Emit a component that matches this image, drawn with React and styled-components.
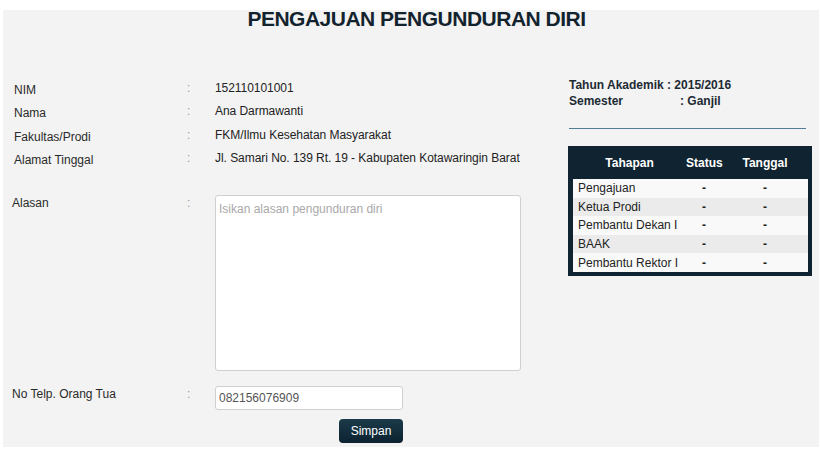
import React from 'react';
import styled, { createGlobalStyle } from 'styled-components';

const GlobalStyle = createGlobalStyle`
  html, body {
    margin: 0;
    padding: 0;
    background: #ffffff;
    font-family: "Liberation Sans", Arial, sans-serif;
  }
`;

const Panel = styled.div`
  margin: 10px 1px 0 3px;
  height: 437px;
  box-sizing: border-box;
  background: #f3f3f3;
  padding: 0 0 0 11px;
  display: flex;
  flex-direction: column;
`;

const Title = styled.h1`
  margin: -2px 0 0 0;
  font-size: 21px;
  line-height: 21px;
  letter-spacing: -0.5px;
  font-weight: bold;
  text-align: center;
  color: #13232e;
`;

const Body = styled.div`
  display: flex;
  align-items: flex-start;
  margin-top: 41px;
`;

const LeftCol = styled.div`
  flex: 0 0 554px;
  padding-top: 6px;
`;

const RightCol = styled.div`
  flex: 0 0 244px;
  padding-top: 7px;
`;

const InfoRow = styled.div`
  display: grid;
  grid-template-columns: 173px 28px 1fr;
  height: 23.5px;
  align-items: center;
  font-size: 12px;
`;

const Label = styled.div`
  color: #2a2a2a;
  padding-top: ${p => (p.$shift ? '4px' : '0')};
  margin-left: ${p => (p.$shift ? '0' : '-2px')};
`;

const Colon = styled.div`
  color: #9a9a9a;
`;

const Value = styled.div`
  color: #222;
  letter-spacing: -0.05px;
`;

const FieldRow = styled.div`
  display: grid;
  grid-template-columns: 173px 28px 1fr;
  align-items: start;
  font-size: 12px;
  line-height: 16px;
  margin-top: ${p => p.$top}px;
`;

const TextArea = styled.textarea`
  width: 306px;
  height: 176px;
  box-sizing: border-box;
  border: 1px solid #cfcfcf;
  border-radius: 3px;
  background: #fff;
  padding: 6px 3px;
  font-family: "Liberation Sans", Arial, sans-serif;
  font-size: 12px;
  line-height: 14px;
  color: #333;
  resize: none;
  display: block;
  &::placeholder {
    color: #a9a9a9;
  }
`;

const Input = styled.input`
  width: 188px;
  height: 24px;
  box-sizing: border-box;
  border: 1px solid #cfcfcf;
  border-radius: 3px;
  background: #fff;
  padding: 0 3px;
  font-family: "Liberation Sans", Arial, sans-serif;
  font-size: 12px;
  color: #555;
  display: block;
`;

const ButtonRow = styled.div`
  display: flex;
  justify-content: flex-end;
  width: 389px;
  margin-top: 9px;
`;

const Button = styled.button`
  width: 64px;
  height: 24px;
  border: none;
  border-radius: 4px;
  background: linear-gradient(#1b3a4a, #0c2230);
  color: #fff;
  font-family: "Liberation Sans", Arial, sans-serif;
  font-size: 12px;
  cursor: pointer;
`;

const Meta = styled.div`
  margin-left: 1px;
  font-size: 12px;
  line-height: 16px;
  font-weight: bold;
  color: #1c2a33;
`;

const MetaKey = styled.span`
  display: ${p => (p.$fixed ? 'inline-block' : 'inline')};
  width: ${p => (p.$fixed ? '111px' : 'auto')};
`;

const Rule = styled.div`
  margin: 19px 0 0 1px;
  width: 237px;
  height: 1px;
  background: #4f7d98;
`;

const Table = styled.div`
  margin-top: 17px;
  width: 244px;
  box-sizing: border-box;
  background: #0f2430;
  padding: 0 4px 4px 5px;
`;

const Grid = styled.div`
  display: grid;
  grid-template-columns: 113px 36px 1fr;
  align-items: center;
`;

const HeadRow = styled(Grid)`
  height: 33px;
  color: #fff;
  font-weight: bold;
  font-size: 12px;
  text-align: center;
`;

const Row = styled(Grid)`
  height: 18.6px;
  font-size: 12px;
  color: #222;
  background: ${p => (p.$alt ? '#ebebeb' : '#f9f9f9')};
`;

const Cell = styled.div`
  text-align: ${p => (p.$left ? 'left' : 'center')};
  padding-left: ${p => (p.$left ? '5px' : '0')};
  font-weight: ${p => (p.$left ? 'normal' : 'bold')};
  white-space: nowrap;
`;

const info = [
  ['NIM', '152110101001'],
  ['Nama', 'Ana Darmawanti'],
  ['Fakultas/Prodi', 'FKM/Ilmu Kesehatan Masyarakat'],
  ['Alamat Tinggal', 'Jl. Samari No. 139 Rt. 19 - Kabupaten Kotawaringin Barat'],
];

const steps = ['Pengajuan', 'Ketua Prodi', 'Pembantu Dekan I', 'BAAK', 'Pembantu Rektor I'];

export default function App() {
  return (
    <>
      <GlobalStyle />
      <Panel>
        <Title>PENGAJUAN PENGUNDURAN DIRI</Title>
        <Body>
          <LeftCol>
            {info.map(([k, v]) => (
              <InfoRow key={k}>
                <Label $shift>{k}</Label>
                <Colon>:</Colon>
                <Value>{v}</Value>
              </InfoRow>
            ))}
            <FieldRow $top={25}>
              <Label>Alasan</Label>
              <Colon>:</Colon>
              <TextArea placeholder="Isikan alasan pengunduran diri" />
            </FieldRow>
            <FieldRow $top={15}>
              <Label>No Telp. Orang Tua</Label>
              <Colon>:</Colon>
              <Input defaultValue="082156076909" />
            </FieldRow>
            <ButtonRow>
              <Button>Simpan</Button>
            </ButtonRow>
          </LeftCol>
          <RightCol>
            <Meta>
              <div>
                <MetaKey>Tahun Akademik </MetaKey>: 2015/2016
              </div>
              <div>
                <MetaKey $fixed>Semester</MetaKey>: Ganjil
              </div>
            </Meta>
            <Rule />
            <Table>
              <HeadRow>
                <Cell>Tahapan</Cell>
                <Cell>Status</Cell>
                <Cell>Tanggal</Cell>
              </HeadRow>
              {steps.map((s, i) => (
                <Row key={s} $alt={i % 2 === 1}>
                  <Cell $left>{s}</Cell>
                  <Cell>-</Cell>
                  <Cell>-</Cell>
                </Row>
              ))}
            </Table>
          </RightCol>
        </Body>
      </Panel>
    </>
  );
}
